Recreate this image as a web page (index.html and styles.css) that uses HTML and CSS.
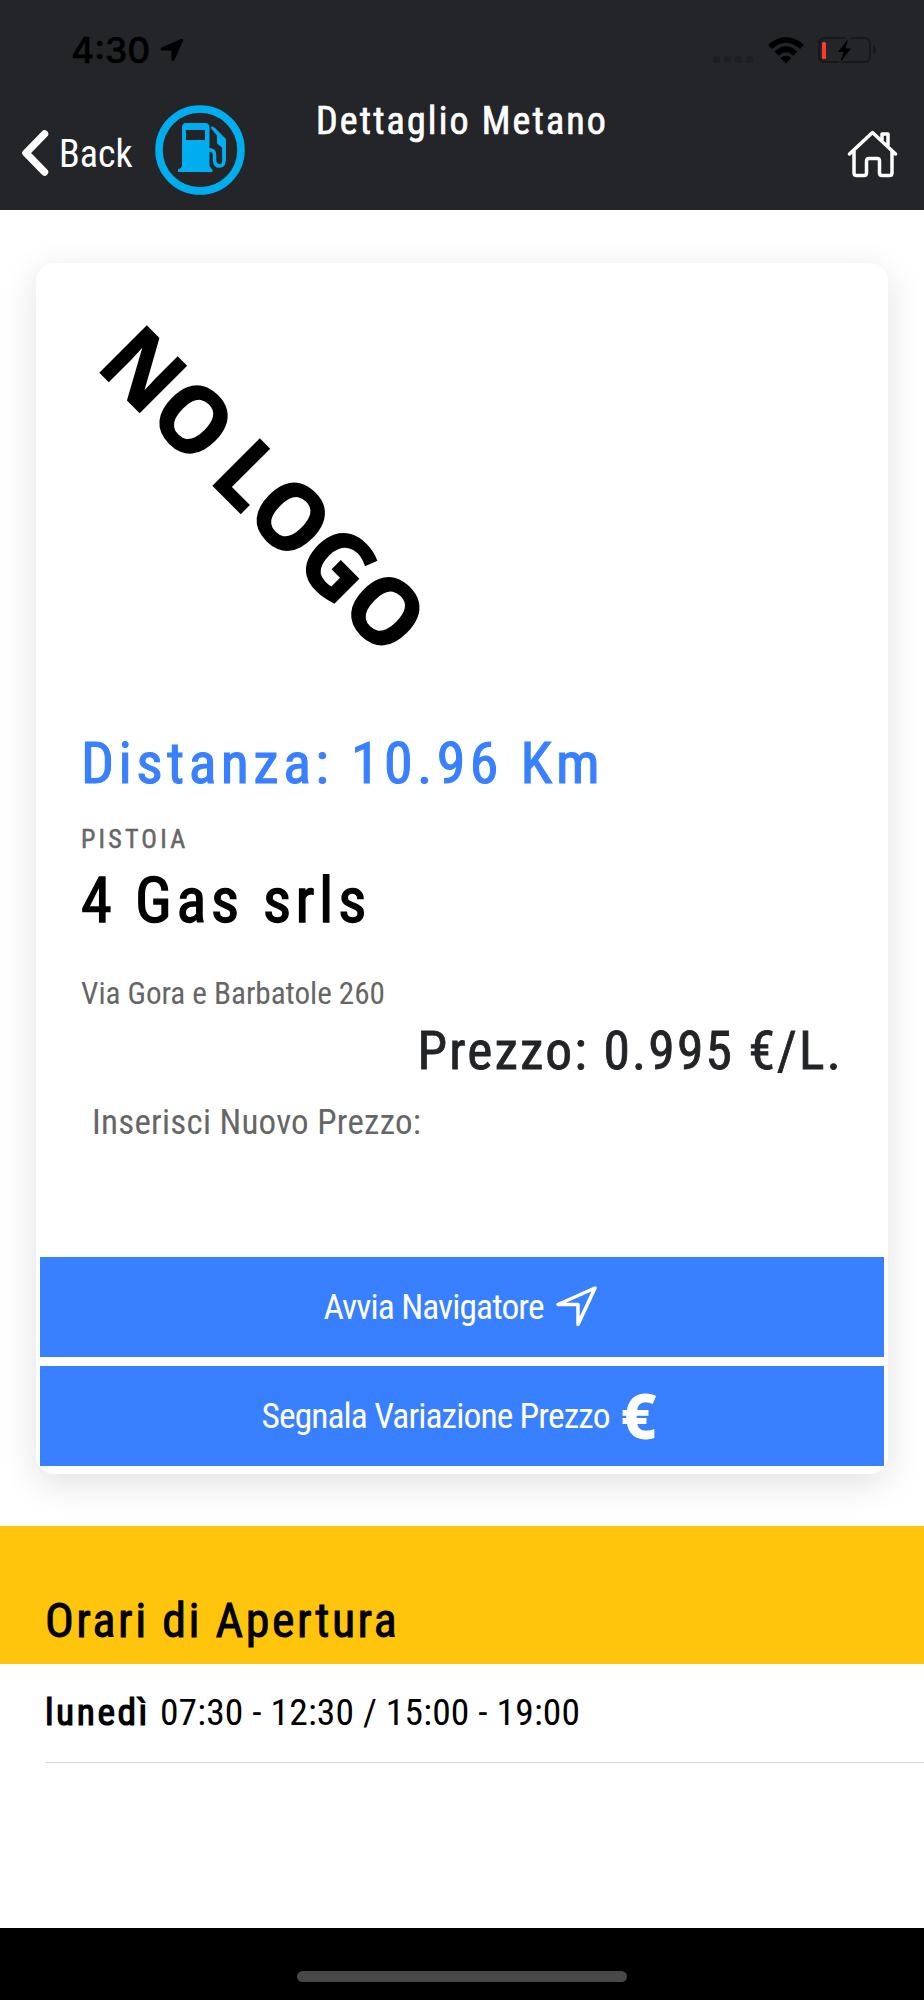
FILE: index.html
```html
<!DOCTYPE html>
<html lang="it">
  <head>
    <meta charset="UTF-8" />
    <meta name="viewport" content="width=device-width, initial-scale=1.0" />
    <title>Dettaglio Metano</title>
    <link rel="stylesheet" href="styles.css">
  </head>

  <body>
    <header class="header">
      <div class="status">
        <span class="time">4:30</span>
        <svg class="location" viewBox="0 0 24 24">
          <path d="M1.500 9.500 21 1Q24 .5 23 3L14.500 22Q12.800 24 11.500 22V12.500H2Q-1 11.500 1.500 9.500Z" />
        </svg>
        <div class="signal"><i></i><i></i><i></i><i></i></div>
        <svg class="wifi" viewBox="0 0 36 27">
          <path d="M0 8Q18-8 36 8L32 12Q18-.5 4 12Z" />
          <path d="M6.500 14.500Q18 4 29.500 14.500L25.300 18.700Q18 12 10.700 18.700Z" />
          <path d="M12.500 21Q18 16.500 23.500 21L18 26.500Z" />
        </svg>
        <svg class="battery" viewBox="0 0 60 30">
          <path class="case" d="M28 2H8Q2 2 2 8V20Q2 26 8 26H22M33 2H47Q53 2 53 8V20Q53 26 47 26H25" />
          <path class="nub" d="M56 9.500Q59 11 59 14T56 18.500Z" />
          <rect class="charge" x="5" y="6" width="4" height="17" rx="1.500" />
          <path d="M31 3 21 16H26.500L23.500 26 34 12.500H28.500Z" />
        </svg>
      </div>
      <div class="toolbar">
        <a class="back">
          <svg class="chevron" viewBox="0 0 28 46">
            <path d="M23.500 4 5 23 23.500 42" />
          </svg>
          <span>Back</span>
        </a>
        <svg class="pump" viewBox="0 0 90 90">
          <circle cx="45" cy="45" r="41" />
          <path fill-rule="evenodd" d="M27 61V22.500Q27 18 31 18H50Q54.500 18 54.500 22.500V61L57.500 65V67H23V64Q26 64 27 61ZM31 25V35H50V25Z" />
          <path class="hose" d="M54 45H56Q59.500 45.500 59.500 50V55Q60 61 64.500 61T69 55V42" />
          <path d="M56 22Q57.500 20.500 60 23L71 34V56H67.500V43L62 38.500V30.500L56.500 24Z" />
        </svg>
        <h1 class="title">Dettaglio Metano</h1>
        <svg class="home" viewBox="0 0 50 48">
          <path d="M2 24 25 2.500 48 24M6.500 21V43Q6.500 45.500 9 45.500H16.500Q19 45.500 19 43V31Q19 28.500 21.500 28.500H29.500Q32 28.500 32 31V43Q32 45.500 34.500 45.500H42Q44.500 45.500 44.500 43V21M34.500 10V4H40.500V15.500" />
        </svg>
      </div>
    </header>

    <main>
      <section class="card">
        <svg class="logo" viewBox="0 0 400 400">
          <text transform="translate(18.500 110) rotate(45)" x="-8" y="0" textLength="413" lengthAdjust="spacingAndGlyphs">NO LOGO</text>
        </svg>
        <div class="info">
          <p class="distance">Distanza: 10.96 Km</p>
          <p class="city">PISTOIA</p>
          <h2 class="name">4 Gas srls</h2>
          <p class="address">Via Gora e Barbatole 260</p>
          <p class="price">Prezzo: 0.995 €/L.</p>
          <p class="new-price">Inserisci Nuovo Prezzo:</p>
        </div>
        <div class="buttons">
          <a class="button">
            <span>Avvia Navigatore</span>
            <svg class="navigate" viewBox="0 0 42 42">
              <path d="M39 3 2 19.500H22V39.500Z" />
            </svg>
          </a>
          <a class="button">
            <span>Segnala Variazione Prezzo</span>
            <b class="euro">€</b>
          </a>
        </div>
      </section>

      <h2 class="hours-title">Orari di Apertura</h2>
      <div class="hours-row">
        <b class="day">lunedì</b>
        <span class="hours">07:30 - 12:30 / 15:00 - 19:00</span>
      </div>
    </main>

    <footer class="footer">
      <div class="home-bar"></div>
    </footer>
  </body>
</html>
```

FILE: styles.css
```css
* {
  margin: 0;
  padding: 0;
  box-sizing: border-box;
}

body {
  display: flex;
  flex-direction: column;
  height: 2000px;
  font-family: "Roboto Condensed", Roboto, sans-serif;
  font-stretch: 75%;
  background-color: white;
  color: black;
}

svg {
  display: block;
  flex: none;
}

p,
span,
h1,
h2,
b {
  white-space: nowrap;
}

/* header */
.header {
  height: 210px;
  background-color: #242529;
}

.status {
  display: flex;
  height: 98px;
  padding-left: 71px;
}

.time {
  width: 89px;
  margin-top: 29px;
  font-family: Inter, sans-serif;
  font-stretch: normal;
  font-size: 35.500px;
  font-weight: 500;
  line-height: 44px;
  -webkit-text-stroke: 0.5px;
}

.location {
  width: 24px;
  height: 24px;
  margin-top: 38px;
}

.signal {
  display: flex;
  gap: 4px;
  margin: 56px 15px 0 529px;
}

.signal i {
  width: 7px;
  height: 7px;
  border-radius: 3px;
  background-color: #1d1e21;
}

.wifi {
  width: 36px;
  height: 27px;
  margin-top: 37px;
}

.battery {
  width: 60px;
  height: 30px;
  margin: 36px 0 0 13px;
}

.case {
  fill: none;
  stroke: #17181a;
  stroke-width: 2;
}

.nub {
  fill: #17181a;
}

.charge {
  fill: #ff3b30;
}

.toolbar {
  display: flex;
  height: 112px;
  padding: 0 26px 0 21px;
  color: white;
}

.back {
  display: flex;
  width: 134px;
  padding-top: 32px;
}

.chevron {
  width: 28px;
  height: 46px;
  margin-right: 10px;
  fill: none;
  stroke: white;
  stroke-width: 7.500;
  stroke-linecap: round;
  stroke-linejoin: round;
}

.back span {
  font-size: 38px;
  line-height: 49px;
}

.pump {
  width: 90px;
  height: 90px;
  margin-top: 7px;
  fill: #00aeef;
}

.pump circle,
.hose {
  fill: none;
  stroke: #00aeef;
  stroke-width: 7.500;
}

.pump .hose {
  stroke-width: 3.500;
}

.title {
  margin: 1px auto 0 71px;
  font-size: 38px;
  font-weight: 400;
  line-height: 45px;
  letter-spacing: 2.150px;
  -webkit-text-stroke: 0.700px;
}

.home {
  width: 51px;
  height: 48px;
  margin-top: 32px;
  fill: none;
  stroke: white;
  stroke-width: 3.500;
  stroke-linecap: round;
  stroke-linejoin: round;
}

/* station card */
.card {
  height: 1211px;
  margin: 53px 36px 0;
  border-radius: 18px;
  background-color: white;
  box-shadow: 0 9px 36px rgba(0, 0, 0, 0.12);
}

.logo {
  width: 400px;
  height: 400px;
  margin-left: 46px;
  overflow: visible;
}

.logo text {
  font-family: "Open Sans", sans-serif;
  font-stretch: normal;
  font-size: 92px;
  font-weight: 700;
  word-spacing: -5px;
  stroke: black;
  stroke-width: 1.500;
}

.info {
  height: 594px;
  padding: 65px 45px 0 45px;
}

.distance {
  color: #3880ff;
  font-size: 58px;
  font-weight: 400;
  line-height: 70px;
  letter-spacing: 4.400px;
  -webkit-text-stroke: 1.100px;
}

.city {
  margin-top: 25px;
  color: #666666;
  font-size: 26px;
  font-weight: 400;
  line-height: 32px;
  letter-spacing: 3.200px;
  -webkit-text-stroke: 0.500px;
}

.name {
  margin-top: 8px;
  font-size: 62.400px;
  font-weight: 400;
  line-height: 76px;
  letter-spacing: 4.500px;
  -webkit-text-stroke: 1.300px;
}

.address {
  margin-top: 35px;
  color: #666666;
  font-size: 31.200px;
  line-height: 40px;
  letter-spacing: -0.05px;
}

.price {
  margin-top: 5px;
  color: #222428;
  font-size: 53.500px;
  line-height: 64px;
  letter-spacing: 2.170px;
  text-align: right;
  -webkit-text-stroke: 0.800px;
}

.new-price {
  margin: 18px 0 0 11px;
  color: #666666;
  font-size: 35px;
  line-height: 44px;
  letter-spacing: 0.250px;
}

.buttons {
  display: flex;
  flex-direction: column;
  gap: 9px;
  padding: 0 4px;
}

.button {
  display: flex;
  align-items: center;
  justify-content: center;
  height: 100px;
  background-color: #3880ff;
  color: white;
  font-size: 35.500px;
  letter-spacing: -0.920px;
}

.navigate {
  width: 42px;
  height: 42px;
  margin: 0 3px 2px 12px;
  fill: none;
  stroke: white;
  stroke-width: 3.500;
  stroke-linejoin: round;
}

.euro {
  margin: 0 7px 2px 11px;
  font-family: "Noto Sans", sans-serif;
  font-stretch: normal;
  font-size: 62px;
  font-weight: 800;
  line-height: 60px;
}

/* opening hours */
.hours-title {
  height: 138px;
  margin-top: 52px;
  padding: 66px 0 0 45px;
  background-color: #ffc40c;
  font-size: 48px;
  font-weight: 400;
  line-height: 58px;
  letter-spacing: 2.500px;
  -webkit-text-stroke: 0.900px;
}

.hours-row {
  display: flex;
  gap: 10px;
  height: 99px;
  margin-left: 45px;
  padding-top: 25px;
  border-bottom: 1px solid #d8d8d8;
  font-size: 37.500px;
  line-height: 46px;
}

.day {
  font-weight: 400;
  letter-spacing: 2.500px;
  -webkit-text-stroke: 1.200px;
}

.hours {
  letter-spacing: 0.170px;
}

/* home indicator */
.footer {
  height: 72px;
  margin-top: auto;
  padding-top: 43px;
  background-color: black;
}

.home-bar {
  width: 330px;
  height: 11px;
  margin: 0 auto;
  border-radius: 6px;
  background-color: #484848;
}
```
